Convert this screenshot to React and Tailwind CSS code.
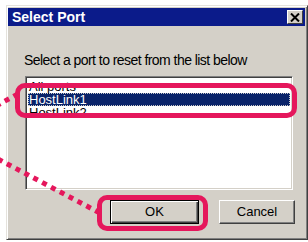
import React from 'react';

const items = ['All ports', 'HostLink1', 'HostLink2'];

const App = () => {
  const selected = 1;

  return (
    <div className="relative w-[308px] h-[242px] overflow-hidden bg-white font-['Liberation_Sans',Arial,sans-serif] text-black">
      <div className="pt-[5px] pl-[6px]">
        {/* Dialog window */}
        <div className="flex flex-col w-[302px] h-[235px] bg-[#d4d0c8] border border-t-[#e4e2dc] border-l-[#e4e2dc] border-r-[#404040] border-b-[#404040] p-[2px] pl-[1px] shadow-[inset_1px_1px_0_#ffffff,inset_-1px_-1px_0_#808080]">
          {/* Title bar */}
          <div className="flex items-center justify-between h-[18px] bg-[#0b1b8a] pl-[4px] pr-[2px]">
            <span className="text-[14px] leading-[18px] font-bold text-white">Select Port</span>
            <button className="flex items-center justify-center w-[16px] h-[14px] bg-[#d4d0c8] border border-t-white border-l-white border-r-[#404040] border-b-[#404040]">
              <svg width="10" height="9" viewBox="0 0 10 9">
                <path d="M1 0.5 L9 8.5 M9 0.5 L1 8.5" stroke="#000" strokeWidth="2" />
              </svg>
            </button>
          </div>

          {/* Body */}
          <p className="mt-[27px] ml-[16px] text-[14px] leading-[14px] tracking-[-0.55px]">
            Select a port to reset from the list below
          </p>

          {/* List box */}
          <div className="mt-[9px] ml-[17px] w-[268px] h-[114px] bg-white border border-t-[#808080] border-l-[#808080] border-r-white border-b-white shadow-[inset_1px_1px_0_#404040,inset_-1px_-1px_0_#d4d0c8] pt-[3px] px-[2px]">
            {items.map((item, index) => (
              <div
                key={item}
                className={`h-[13px] pl-[1px] text-[13px] leading-[13px] ${
                  index === selected
                    ? 'bg-[#0a246a] text-white outline outline-1 outline-dotted outline-[#c8c8c8] -outline-offset-1'
                    : ''
                }`}
              >
                {item}
              </div>
            ))}
          </div>

          {/* Buttons */}
          <div className="flex mt-[10px] ml-[102px] gap-[20px]">
            <button className="w-[89px] h-[24px] bg-[#d4d0c8] border border-black shadow-[inset_1px_1px_0_#ffffff,inset_-1px_-1px_0_#404040,inset_-2px_-2px_0_#808080] text-[13px]">
              OK
            </button>
            <button className="w-[76px] h-[24px] bg-[#d4d0c8] border border-t-white border-l-white border-r-[#404040] border-b-[#404040] shadow-[inset_-1px_-1px_0_#808080] text-[13px]">
              Cancel
            </button>
          </div>
        </div>
      </div>

      {/* Callout highlights */}
      <div className="absolute left-[15px] top-[83px] w-[282px] h-[35px] border-[5px] border-[#e5175c] rounded-[10px]" />
      <div className="absolute left-[97px] top-[195px] w-[111px] h-[36px] border-[5px] border-[#e5175c] rounded-[10px]" />
      <svg className="absolute left-0 top-0" width="308" height="242">
        <line x1="-4" y1="106" x2="16" y2="95" stroke="#e5175c" strokeWidth="5" strokeDasharray="5 5" />
        <line x1="-2" y1="159" x2="98" y2="212" stroke="#e5175c" strokeWidth="5" strokeDasharray="5 5" />
      </svg>
    </div>
  );
};

export default App;
